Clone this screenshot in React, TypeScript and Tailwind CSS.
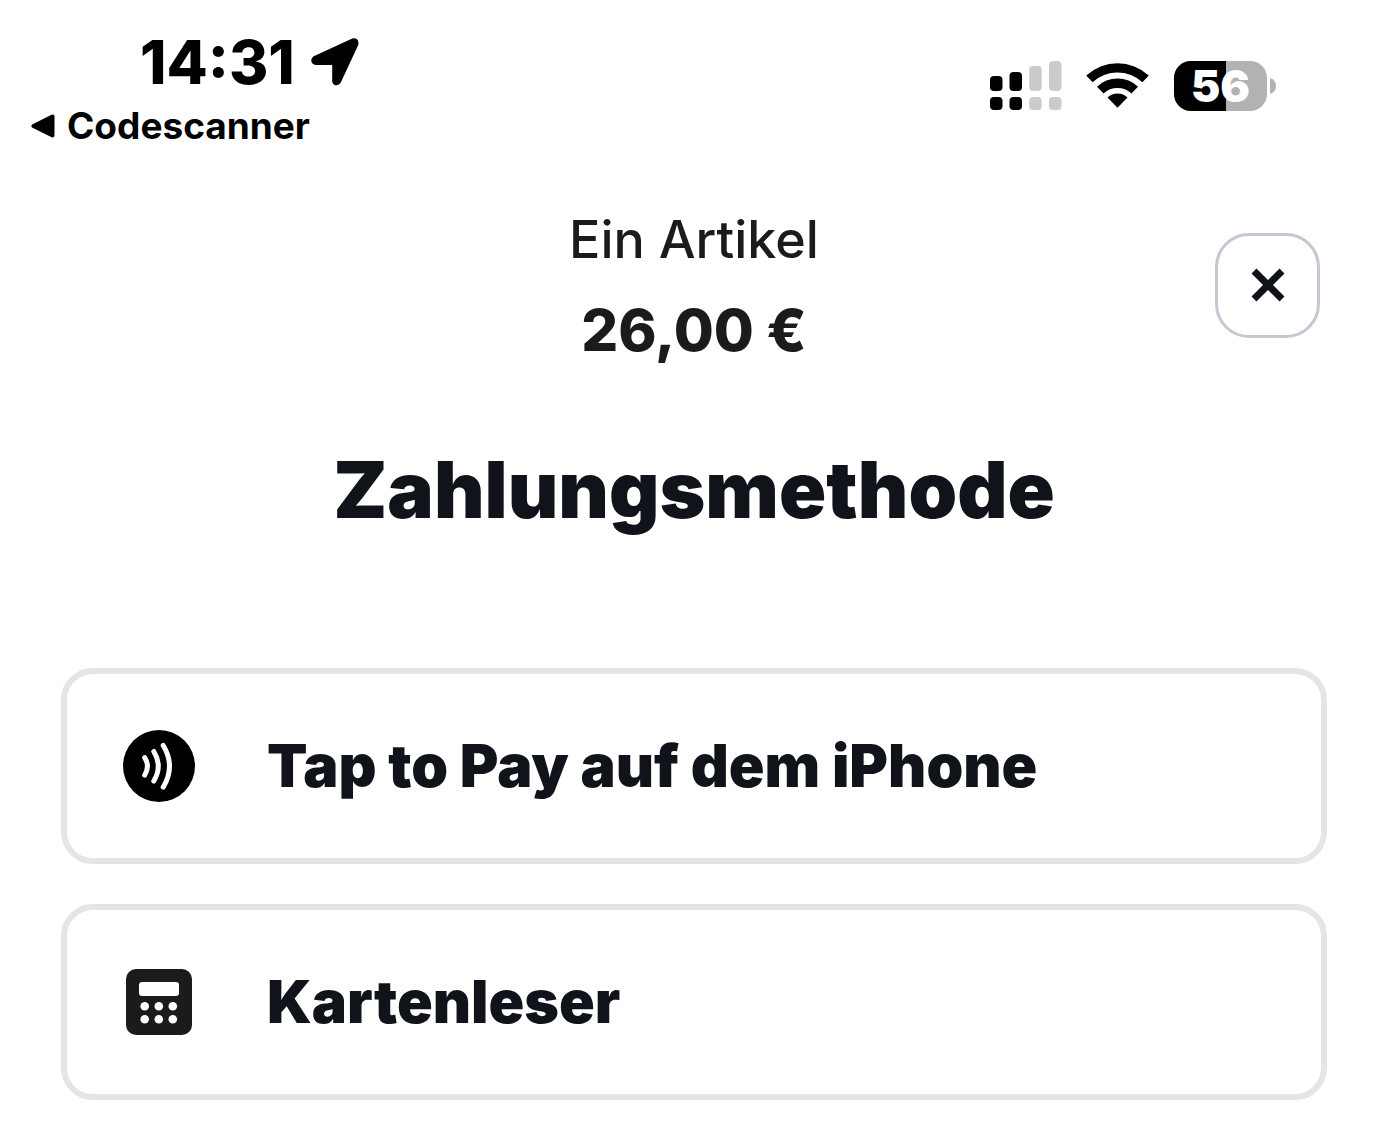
import type { ReactNode } from 'react'

function LocationArrow() {
  return (
    <svg viewBox="0 0 48 48" className="size-12" aria-hidden="true">
      <path
        d="M4 21 L42 3.4 Q44.8 2.6 44.4 6 L27.2 43 Q25 45.6 24.2 43 L24.2 24 L4.5 23.9 Q2.2 22.8 4 21Z"
        fill="#000"
        stroke="#000"
        strokeWidth="6"
        strokeLinejoin="round"
      />
    </svg>
  )
}

function SignalBars() {
  return (
    <svg viewBox="0 0 72 50" className="h-[50px] w-[72px]" role="img" aria-label="Signal">
      <g fill="#000">
        <rect x="0" y="15" width="12.5" height="15" rx="4" />
        <rect x="0" y="36" width="12.5" height="13" rx="4" />
        <rect x="19.5" y="11" width="12.5" height="19" rx="4" />
        <rect x="19.5" y="36" width="12.5" height="13" rx="4" />
      </g>
      <g fill="#cbcbcb">
        <rect x="39.2" y="5" width="12.5" height="25" rx="4" />
        <rect x="39.2" y="36" width="12.5" height="13" rx="4" />
        <rect x="59" y="0" width="12.5" height="30" rx="4" />
        <rect x="59" y="36" width="12.5" height="13" rx="4" />
      </g>
    </svg>
  )
}

function WifiIcon() {
  return (
    <svg viewBox="0 0 64 48" className="h-12 w-16" role="img" aria-label="WLAN">
      <g fill="#000">
        <path d="M.2 13.6 A46 46 0 0 1 62.8 13.6 L56.4 20.2 A37 37 0 0 0 6.6 20.2Z" />
        <path d="M11 24.7 A29.5 29.5 0 0 1 52 24.7 L45.4 31.4 A20.5 20.5 0 0 0 17.6 31.4Z" />
        <path d="M21.5 35.6 A14 14 0 0 1 41.5 35.6 L31.5 45.8Z" />
      </g>
    </svg>
  )
}

function Battery({ level }: { level: number }) {
  return (
    <div className="flex items-center gap-[3px]">
      <div className="relative flex h-[50px] w-[93px] items-center justify-center rounded-[17px] bg-[#b2b2b2]">
        <div className="absolute inset-y-0 left-0 rounded-l-[17px] bg-black" style={{ width: `${level}%` }} />
        <span className="relative text-[44px] leading-[50px] font-black text-white">{level}</span>
      </div>
      <svg viewBox="0 0 6 16" className="h-4 w-[6px]" aria-hidden="true">
        <path d="M0 0 Q6 2 6 8 Q6 14 0 16Z" fill="#b2b2b2" />
      </svg>
    </div>
  )
}

function StatusBar() {
  return (
    <div className="flex items-start justify-between pt-[30px] pr-[102px] pl-[31px]">
      <div className="flex flex-col gap-2">
        <div className="flex items-center gap-4 pl-[109px]">
          <span className="text-[60px] leading-[64px] font-extrabold">14:31</span>
          <LocationArrow />
        </div>
        <a href="#" className="flex items-center gap-3 text-[37px] leading-[48px] font-bold">
          <svg viewBox="0 0 24 24" className="size-6" aria-hidden="true">
            <path
              d="M2.5 12 21.5 2.5 V21.5Z"
              fill="#000"
              stroke="#000"
              strokeWidth="4"
              strokeLinejoin="round"
            />
          </svg>
          Codescanner
        </a>
      </div>
      <div className="flex items-center gap-6 pt-[31px]">
        <SignalBars />
        <WifiIcon />
        <Battery level={56} />
      </div>
    </div>
  )
}

function ContactlessIcon() {
  return (
    <svg viewBox="0 0 72 72" className="size-[72px]" aria-hidden="true">
      <circle cx="36" cy="36" r="36" fill="#000" />
      <g fill="none" stroke="#fff" strokeWidth="5" strokeLinecap="round">
        <path d="M21.7 27.6 Q27.2 36 21.7 45.2" />
        <path d="M30.8 21.5 Q39.8 36 30.8 51" />
        <path d="M40.2 15.5 Q52.8 36 40.2 57.2" />
      </g>
    </svg>
  )
}

function CardReaderIcon() {
  return (
    <svg viewBox="0 0 72 72" className="size-[72px]" aria-hidden="true">
      <rect x="3" y="3" width="66" height="66" rx="10" fill="#1b1b1b" />
      <g fill="#fff">
        <rect x="16" y="16" width="40" height="14" rx="3" />
        <circle cx="21.7" cy="40.2" r="4.3" />
        <circle cx="35.8" cy="40.2" r="4.3" />
        <circle cx="49.8" cy="40.2" r="4.3" />
        <circle cx="21.7" cy="53.2" r="4.3" />
        <circle cx="35.8" cy="53.2" r="4.3" />
        <circle cx="49.8" cy="53.2" r="4.3" />
      </g>
    </svg>
  )
}

function MethodButton({ icon, label }: { icon: ReactNode; label: string }) {
  return (
    <button
      type="button"
      className="flex h-[196px] w-full items-center gap-[72px] rounded-[32px] border-6 border-[#e5e5e5] px-14 text-left text-[59px] leading-[64px] font-black text-[#10131a]"
    >
      {icon}
      {label}
    </button>
  )
}

export default function App() {
  return (
    <div className="min-h-screen bg-white font-['Inter','Liberation_Sans',sans-serif] text-black">
      <StatusBar />
      <main className="pt-[60px] pr-[51px] pb-9 pl-[61px]">
        <header className="grid grid-cols-[1fr_auto_1fr] items-center px-[7px]">
          <div className="col-start-2 flex flex-col gap-[30px] text-center text-[#1b1b1b]">
            <p className="text-[52px] leading-[60px] font-medium">Ein Artikel</p>
            <p className="text-[58px] leading-[60px] font-extrabold">26,00 €</p>
          </div>
          <button
            type="button"
            aria-label="Schließen"
            className="flex size-[105px] items-center justify-center justify-self-end rounded-[34px] border-3 border-[#c5c8d2]"
          >
            <svg viewBox="0 0 34 34" className="size-[34px]" aria-hidden="true">
              <path d="M3 3 31 31 M31 3 3 31" stroke="#10131a" strokeWidth="7" />
            </svg>
          </button>
        </header>
        <h1 className="mt-[82px] text-center text-[78px] leading-[96px] font-black text-[#10131a]">
          Zahlungsmethode
        </h1>
        <div className="mt-[130px] flex flex-col gap-10">
          <MethodButton icon={<ContactlessIcon />} label="Tap to Pay auf dem iPhone" />
          <MethodButton icon={<CardReaderIcon />} label="Kartenleser" />
        </div>
      </main>
    </div>
  )
}
